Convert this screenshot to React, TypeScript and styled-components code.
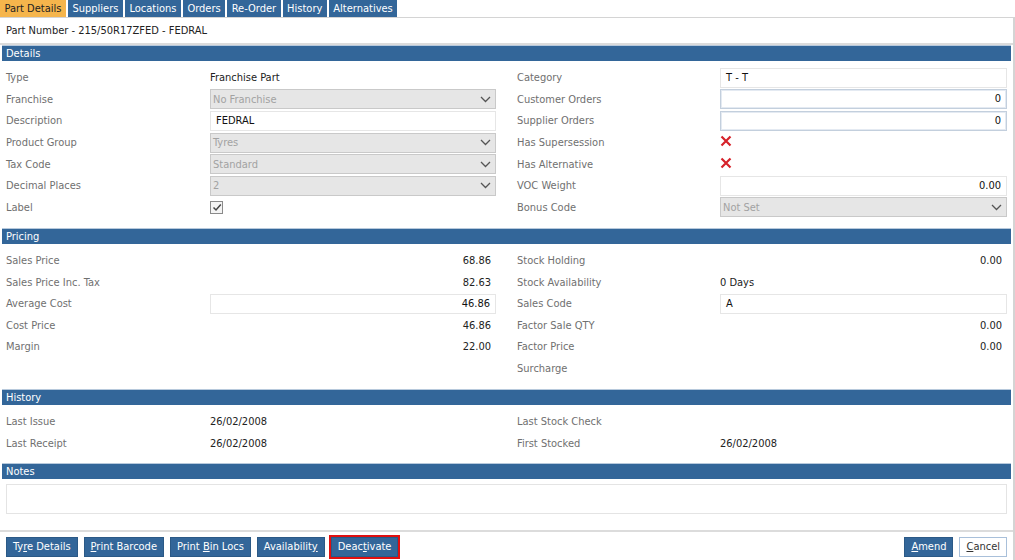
import React from "react";
import styled, { createGlobalStyle } from "styled-components";

const GlobalStyle = createGlobalStyle`
  html, body { margin: 0; padding: 0; background: #fff; }
  body {
    font-family: Tahoma, "DejaVu Sans Condensed", "Liberation Sans", sans-serif;
    font-size: 11px;
    color: #222;
  }
`;

const BLUE = "#336699";

const Page = styled.div`
  width: 1015px;
  height: 560px;
  display: flex;
  flex-direction: column;
  overflow: hidden;
`;

const TabBar = styled.div`
  display: flex;
  gap: 2px;
  height: 17px;
`;

const Tab = styled.div<{ $active?: boolean }>`
  height: 17px;
  line-height: 17px;
  padding: 0 4.5px;
  background: ${(p) => (p.$active ? "#f5b54c" : BLUE)};
  color: ${(p) => (p.$active ? "#222" : "#fff")};
`;

const Panel = styled.div`
  flex: 1;
  min-height: 0;
  display: flex;
  flex-direction: column;
  border-top: 1px solid #d4d4d4;
  border-right: 2px solid #d4d4d4;
`;

const TitleRow = styled.div`
  height: 25px;
  line-height: 25px;
  padding-left: 6px;
  border-bottom: 2px solid #dcdcdc;
  color: #222;
`;

const Section = styled.div`
  margin: 0 2px;
`;

const SectionHeader = styled.div`
  height: 15px;
  line-height: 15px;
  padding-left: 4px;
  background: ${BLUE};
  color: #fff;
  border-top: 1px solid #b7c9dc;
`;

const Body = styled.div`
  display: grid;
  grid-template-columns: 490px 490px;
  column-gap: 21px;
  padding: 6px 4px 9.5px;
`;

const Column = styled.div<{ $label: number }>`
  display: grid;
  grid-template-columns: ${(p) => p.$label}px 1fr;
  grid-auto-rows: 21.6px;
  align-items: center;
`;

const Label = styled.div`
  color: #707070;
`;

const Value = styled.div<{ $right?: boolean }>`
  color: #222;
  text-align: ${(p) => (p.$right ? "right" : "left")};
  padding-right: ${(p) => (p.$right ? "5px" : "0")};
`;

const Input = styled.div<{ $right?: boolean; $focus?: boolean }>`
  box-sizing: border-box;
  height: 20px;
  line-height: 18px;
  padding: 0 5px;
  border: 1px solid ${(p) => (p.$focus ? "#c3cfdd" : "#e6e6e6")};
  box-shadow: ${(p) => (p.$focus ? "inset 0 0 0 1px #e4eaf2" : "none")};
  background: #fff;
  color: #111;
  text-align: ${(p) => (p.$right ? "right" : "left")};
`;

const Select = styled.div`
  box-sizing: border-box;
  height: 20px;
  display: flex;
  align-items: center;
  justify-content: space-between;
  padding: 0 4px 0 2px;
  border: 1px solid #c9c9c9;
  background: #e6e6e6;
  color: #a2a2a2;
`;

const Check = styled.div`
  width: 11px;
  height: 11px;
  border: 1px solid #8a8a8a;
  background: #f4f4f4;
  display: flex;
  align-items: center;
  justify-content: center;
`;

const NotesBox = styled.div`
  margin: 5px 4px 0;
  height: 28px;
  border: 1px solid #e4e4e4;
`;

const Footer = styled.div`
  box-sizing: border-box;
  margin-top: auto;
  height: 30px;
  border-top: 2px solid #dcdcdc;
  display: flex;
  align-items: flex-start;
  padding: 5px 6px 0;
  gap: 6px;
`;

const Spacer = styled.div`
  flex: 1;
`;

const Button = styled.div<{ $light?: boolean; $flag?: boolean }>`
  box-sizing: border-box;
  height: 20px;
  line-height: 18px;
  padding: 0 6px;
  border: 1px solid ${(p) => (p.$light ? "#a9c0da" : "#2b5986")};
  background: ${(p) => (p.$light ? "#fff" : BLUE)};
  color: ${(p) => (p.$light ? "#333" : "#fff")};
  outline: ${(p) => (p.$flag ? "2px solid #e01010" : "none")};
  outline-offset: 0;
  u { text-decoration: underline; }
`;

const Chevron = () => (
  <svg width="11" height="7" viewBox="0 0 11 7">
    <path d="M1 1 L5.5 5.5 L10 1" fill="none" stroke="#555" strokeWidth="1.3" />
  </svg>
);

const Cross = () => (
  <svg width="12" height="12" viewBox="0 0 12 12">
    <path d="M1.5 1.5 L10.5 10.5 M10.5 1.5 L1.5 10.5" stroke="#d6222a" strokeWidth="2.2" />
  </svg>
);

const Tick = () => (
  <svg width="10" height="9" viewBox="0 0 10 9">
    <path d="M1.5 4.5 L4 7 L8.8 1.5" fill="none" stroke="#444" strokeWidth="1.5" />
  </svg>
);

const Dropdown = ({ text }: { text: string }) => (
  <Select>
    <span>{text}</span>
    <Chevron />
  </Select>
);

const tabs = ["Part Details", "Suppliers", "Locations", "Orders", "Re-Order", "History", "Alternatives"];

export default function App() {
  return (
    <Page>
      <GlobalStyle />
      <TabBar>
        {tabs.map((t, i) => (
          <Tab key={t} $active={i === 0}>{t}</Tab>
        ))}
      </TabBar>
      <Panel>
        <TitleRow>Part Number - 215/50R17ZFED - FEDRAL</TitleRow>

        <Section>
          <SectionHeader>Details</SectionHeader>
          <Body>
            <Column $label={204}>
              <Label>Type</Label>
              <Value>Franchise Part</Value>
              <Label>Franchise</Label>
              <Dropdown text="No Franchise" />
              <Label>Description</Label>
              <Input>FEDRAL</Input>
              <Label>Product Group</Label>
              <Dropdown text="Tyres" />
              <Label>Tax Code</Label>
              <Dropdown text="Standard" />
              <Label>Decimal Places</Label>
              <Dropdown text="2" />
              <Label>Label</Label>
              <Check><Tick /></Check>
            </Column>
            <Column $label={203}>
              <Label>Category</Label>
              <Input>T - T</Input>
              <Label>Customer Orders</Label>
              <Input $right $focus>0</Input>
              <Label>Supplier Orders</Label>
              <Input $right $focus>0</Input>
              <Label>Has Supersession</Label>
              <Value><Cross /></Value>
              <Label>Has Alternative</Label>
              <Value><Cross /></Value>
              <Label>VOC Weight</Label>
              <Input $right>0.00</Input>
              <Label>Bonus Code</Label>
              <Dropdown text="Not Set" />
            </Column>
          </Body>
        </Section>

        <Section>
          <SectionHeader>Pricing</SectionHeader>
          <Body>
            <Column $label={204}>
              <Label>Sales Price</Label>
              <Value $right>68.86</Value>
              <Label>Sales Price Inc. Tax</Label>
              <Value $right>82.63</Value>
              <Label>Average Cost</Label>
              <Input $right>46.86</Input>
              <Label>Cost Price</Label>
              <Value $right>46.86</Value>
              <Label>Margin</Label>
              <Value $right>22.00</Value>
            </Column>
            <Column $label={203}>
              <Label>Stock Holding</Label>
              <Value $right>0.00</Value>
              <Label>Stock Availability</Label>
              <Value>0 Days</Value>
              <Label>Sales Code</Label>
              <Input>A</Input>
              <Label>Factor Sale QTY</Label>
              <Value $right>0.00</Value>
              <Label>Factor Price</Label>
              <Value $right>0.00</Value>
              <Label>Surcharge</Label>
              <Value />
            </Column>
          </Body>
        </Section>

        <Section>
          <SectionHeader>History</SectionHeader>
          <Body>
            <Column $label={204}>
              <Label>Last Issue</Label>
              <Value>26/02/2008</Value>
              <Label>Last Receipt</Label>
              <Value>26/02/2008</Value>
            </Column>
            <Column $label={203}>
              <Label>Last Stock Check</Label>
              <Value />
              <Label>First Stocked</Label>
              <Value>26/02/2008</Value>
            </Column>
          </Body>
        </Section>

        <Section>
          <SectionHeader>Notes</SectionHeader>
          <NotesBox />
        </Section>

        <Footer>
          <Button>Ty<u>r</u>e Details</Button>
          <Button><u>P</u>rint Barcode</Button>
          <Button>Print <u>B</u>in Locs</Button>
          <Button>Availabilit<u>y</u></Button>
          <Button $flag>Deac<u>t</u>ivate</Button>
          <Spacer />
          <Button><u>A</u>mend</Button>
          <Button $light><u>C</u>ancel</Button>
        </Footer>
      </Panel>
    </Page>
  );
}
